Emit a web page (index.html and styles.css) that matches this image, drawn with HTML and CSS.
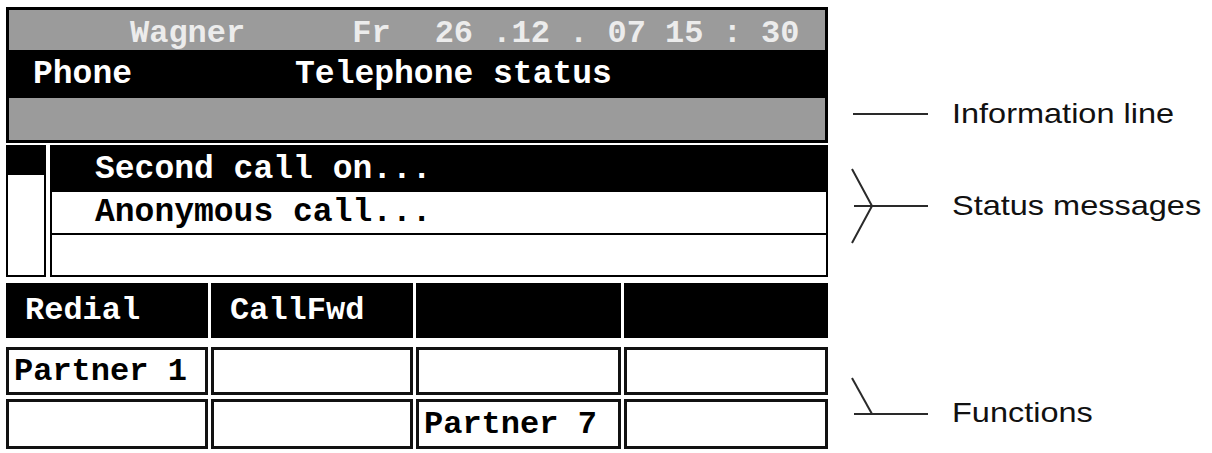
FILE: index.html
```html
<!DOCTYPE html>
<html>
<head>
<meta charset="utf-8">
<link rel="stylesheet" href="styles.css">
</head>
<body>
<div class="page">
  <div class="top">
    <div class="hdr"><span class="h-name">Wagner</span><span class="h-day">Fr</span><span class="h-date">26 .12 . 07 15 : 30</span></div>
    <div class="title"><span>Phone</span><span class="t-right">Telephone status</span></div>
    <div class="info"></div>
  </div>
  <div class="ann ann-info">
    <svg width="100" height="20" viewBox="0 0 100 20"><line x1="25" y1="10" x2="100" y2="10"/></svg>
    <span class="label">Information line</span>
  </div>

  <div class="status">
    <div class="s-left"></div>
    <div class="s-main">
      <div class="s-row s-active">Second call on...</div>
      <div class="s-row s-line">Anonymous call...</div>
      <div class="s-row s-line s-last"></div>
    </div>
  </div>
  <div class="ann ann-status">
    <svg width="100" height="80" viewBox="0 0 100 80"><polyline points="24,3 44,40 24,77"/><line x1="26" y1="40" x2="100" y2="40"/></svg>
    <span class="label">Status messages</span>
  </div>

  <div class="fn">
    <div class="fkey">Redial</div>
    <div class="fkey">CallFwd</div>
    <div class="fkey"></div>
    <div class="fkey"></div>
    <div class="cell">Partner 1</div>
    <div class="cell"></div>
    <div class="cell"></div>
    <div class="cell"></div>
    <div class="cell"></div>
    <div class="cell"></div>
    <div class="cell">Partner 7</div>
    <div class="cell"></div>
  </div>
  <div class="ann ann-fn">
    <svg width="100" height="76" viewBox="0 0 100 76"><line x1="24" y1="3" x2="44" y2="39"/><line x1="26" y1="39" x2="100" y2="39"/></svg>
    <span class="label">Functions</span>
  </div>
</div>
</body>
</html>
```
FILE: styles.css
```css
html, body {
  margin: 0;
  background: #fff;
}

.page {
  display: grid;
  grid-template-columns: 822px 1fr;
  padding: 7px 0 0 6px;
  font-family: "Courier New", "Nimbus Mono PS", "Nimbus Mono L", "FreeMono", "Courier 10 Pitch", Courier, "Liberation Mono", monospace;
  font-weight: bold;
}

/* ---- top block ---- */
.top {
  background: #000;
  padding: 3px;
  display: flex;
  flex-direction: column;
}

.hdr {
  box-sizing: border-box;
  height: 40px;
  padding-top: 6px;
  background: #9b9b9b;
  color: #ececec;
  font-size: 32px;
  display: flex;
  align-items: center;
  white-space: pre;
}
.h-name { margin-left: 121px; }
.h-day { margin-left: 107px; }
.h-date { margin-left: 44px; }

.title {
  height: 47px;
  color: #fff;
  font-size: 33px;
  display: flex;
  align-items: center;
  padding-left: 24px;
  padding-top: 2px;
  box-sizing: border-box;
}
.t-right { margin-left: 163px; }

.info {
  height: 42px;
  margin-top: 1px;
  background: #9b9b9b;
}

/* ---- status block ---- */
.status {
  margin-top: 2px;
  height: 132px;
  display: flex;
  gap: 4px;
}
.s-left {
  box-sizing: border-box;
  width: 40px;
  border: 2px solid #000;
  background: linear-gradient(#000 0 28px, #fff 28px);
}
.s-main {
  flex: 1;
  box-sizing: border-box;
  border: 2px solid #000;
  display: flex;
  flex-direction: column;
  font-size: 33px;
}
.s-row {
  box-sizing: border-box;
  height: 43px;
  padding-left: 43px;
  display: flex;
  align-items: center;
  color: #000;
  background: #fff;
}
.s-active {
  background: #000;
  color: #fff;
  padding-top: 2px;
}
.s-line { border-top: 2px solid #000; }
.s-last { flex: 1; height: auto; }

/* ---- function keys ---- */
.fn {
  margin-top: 6px;
  display: grid;
  grid-template-columns: 202px 202px 205px 204px;
  grid-template-rows: 60px 48px 50px;
  column-gap: 3px;
  row-gap: 4px;
  font-size: 32px;
}
.fkey {
  background: #000;
  color: #fff;
  display: flex;
  align-items: center;
  padding-left: 19px;
  margin-bottom: 5px;
}
.cell {
  box-sizing: border-box;
  border: 3px solid #111;
  background: #fff;
  color: #000;
  display: flex;
  align-items: center;
  padding-left: 5px;
}

/* ---- annotations ---- */
.ann {
  align-self: start;
  display: flex;
  align-items: center;
}
.ann svg {
  flex: none;
  stroke: #2a2a2a;
  stroke-width: 2;
  fill: none;
}
.label {
  margin-left: 24px;
  font-family: "Liberation Sans", Arial, sans-serif;
  font-weight: normal;
  font-size: 28px;
  line-height: 32px;
  color: #111;
  transform: scaleX(1.16);
  transform-origin: left center;
  white-space: nowrap;
}
.ann-info { margin-top: 91px; }
.ann-status { margin-top: 23px; }
.ann-fn { margin-top: 98px; }
```
